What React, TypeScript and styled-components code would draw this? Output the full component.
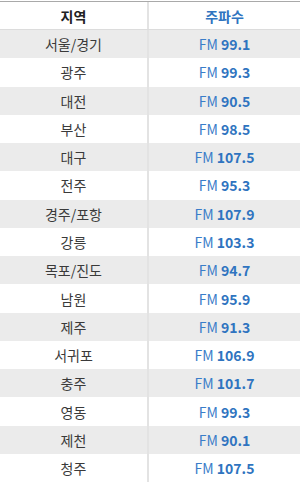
import React from "react";
import styled, { createGlobalStyle } from "styled-components";

const Global = createGlobalStyle`
  html, body { margin: 0; padding: 0; background: #fff; }
  body { font-family: "Noto Sans CJK KR", "Noto Sans", sans-serif; }
`;

const Wrap = styled.div`
  width: 300px;
  padding-top: 1px;
`;

const Table = styled.div`
  border-top: 1px solid #a9a9a9;
  display: flex;
  flex-direction: column;
`;

const Row = styled.div<{ $head?: boolean; $shade?: boolean }>`
  display: grid;
  grid-template-columns: 149px 1fr;
  height: ${(p) => (p.$head ? "27px" : "28.27px")};
  background: ${(p) => (p.$shade ? "#ebebeb" : "#fff")};
  border-bottom: ${(p) => (p.$head ? "1px solid #dcdcdc" : "none")};
`;

const Cell = styled.div<{ $left?: boolean; $head?: boolean; $blue?: boolean }>`
  display: flex;
  align-items: center;
  justify-content: center;
  font-size: 14px;
  line-height: 1;
  font-weight: ${(p) => (p.$head ? 700 : 400)};
  color: ${(p) => (p.$blue ? "#2f74c0" : p.$head ? "#222" : "#3a3a3a")};
  border-right: ${(p) => (p.$left ? "2px solid #e3e3e3" : "none")};
`;

const Freq = styled.span`
  color: #3a7dc9;
  font-size: 14px;
  b {
    font-weight: 700;
    color: #2f74c0;
  }
`;

const data: [string, string][] = [
  ["서울/경기", "99.1"],
  ["광주", "99.3"],
  ["대전", "90.5"],
  ["부산", "98.5"],
  ["대구", "107.5"],
  ["전주", "95.3"],
  ["경주/포항", "107.9"],
  ["강릉", "103.3"],
  ["목포/진도", "94.7"],
  ["남원", "95.9"],
  ["제주", "91.3"],
  ["서귀포", "106.9"],
  ["충주", "101.7"],
  ["영동", "99.3"],
  ["제천", "90.1"],
  ["청주", "107.5"],
];

export default function App() {
  return (
    <Wrap>
      <Global />
      <Table>
        <Row $head>
          <Cell $left $head>지역</Cell>
          <Cell $head $blue>주파수</Cell>
        </Row>
        {data.map(([region, f], i) => (
          <Row key={region} $shade={i % 2 === 0}>
            <Cell $left>{region}</Cell>
            <Cell>
              <Freq>
                FM <b>{f}</b>
              </Freq>
            </Cell>
          </Row>
        ))}
      </Table>
    </Wrap>
  );
}
